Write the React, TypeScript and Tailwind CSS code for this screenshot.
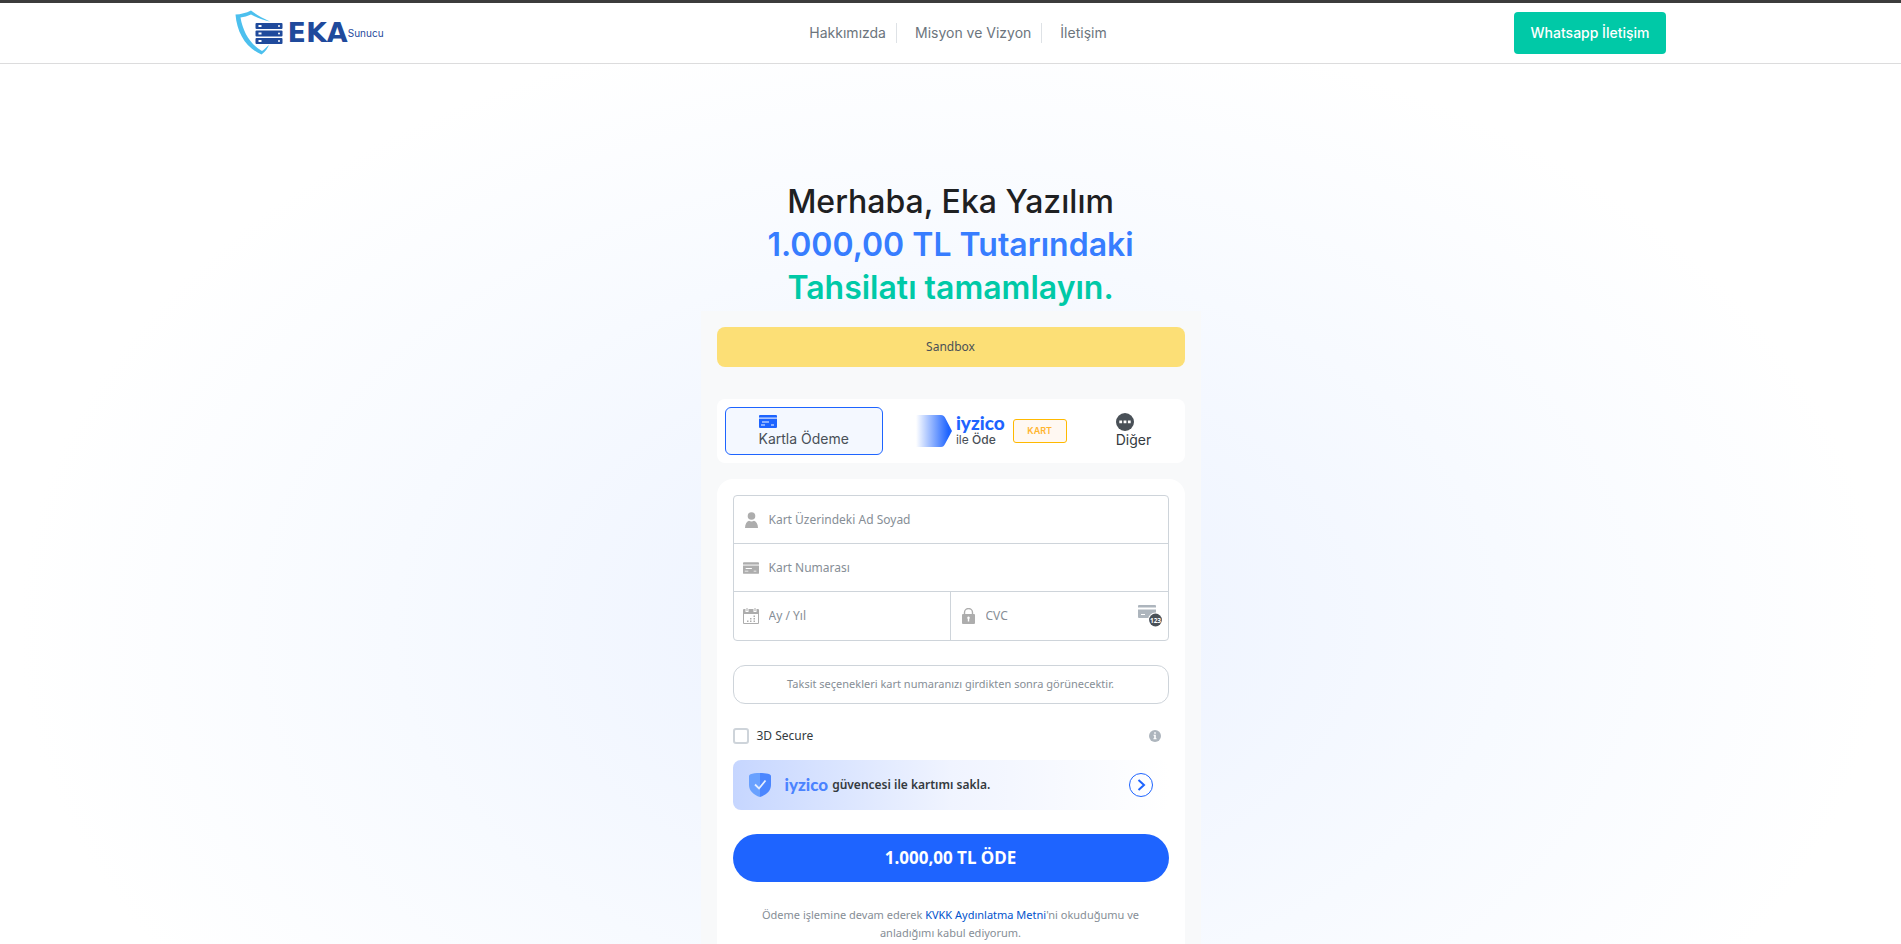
import type { ReactNode } from 'react';

const navLinks = ['Hakkımızda', 'Misyon ve Vizyon', 'İletişim'];

function Logo() {
  return (
    <a href="#" aria-label="EKA Sunucu" className="flex items-center w-40 shrink-0 text-[#1f4a9c]">
      <svg className="shrink-0" width="49" height="46" viewBox="0 0 49 46" fill="none">
        <path d="M0.500 4.500C6 4.300 11 3 16 0.500C21 4.500 27 8 35 11.500C28 10 22 7.800 16 4.500C12.500 6 9 7 5.500 7.500C8 22 15 34 27 41C30 39 32 36.500 34 35C32.500 38.500 30.500 41.500 26.500 44.500C11 38 2 23 0.500 4.500Z" fill="#4cc0ee" />
        {[13, 20.5, 28].map(y => (
          <g key={y}>
            <rect x="20.500" y={y} width="27" height="6" rx="1" fill="#1f4a9c" />
            <rect x="23.500" y={y + 2} width="3" height="2" fill="#fff" />
            <circle cx="44" cy={y + 3} r="1" fill="#fff" />
          </g>
        ))}
      </svg>
      <span className="ml-1 font-['DejaVu_Sans',sans-serif] text-[27px] leading-8 font-bold">EKA</span>
      <span className="text-[10px]">Sunucu</span>
    </a>
  );
}

function CardIcon({ className }: { className: string }) {
  return (
    <svg className={className} viewBox="0 0 18 13" fill="currentColor">
      <path d="M1 0h16a1 1 0 0 1 1 1v1.500H0V1a1 1 0 0 1 1-1Z" />
      <path d="M0 2.500h18V4H0z" opacity=".35" />
      <path fillRule="evenodd" d="M0 4h18v8a1 1 0 0 1-1 1H1a1 1 0 0 1-1-1V4Zm3 2.500v1h7v-1H3Zm-1 3v1h4v-1H2Zm10 0v1h3v-1h-3Z" />
    </svg>
  );
}

function UserIcon() {
  return (
    <svg className="size-4" viewBox="0 0 16 16" fill="currentColor">
      <circle cx="8.500" cy="4" r="3.800" />
      <path d="M2 16c0-4 2-6.500 4-7.200 1.500.9 3.500.9 5 0 2 .7 4 3.200 4 7.200H2Z" />
    </svg>
  );
}

function CalendarIcon() {
  return (
    <svg className="size-4" viewBox="0 0 16 16" fill="currentColor">
      <path fillRule="evenodd" d="M1 1h1.500v3h3V1h5v3h3V1H15a1 1 0 0 1 1 1v13a1 1 0 0 1-1 1H1a1 1 0 0 1-1-1V2a1 1 0 0 1 1-1Zm0 5v9h14V6H1Z" />
      <path d="M3.500 0h1v3h-1zM11.500 0h1v3h-1zM10.500 7.500H12V9h-1.500zM7 10h1.500v1.500H7zM10.500 10H12v1.500h-1.500zM4 12.500h1.500V14H4zM7 12.500h1.500V14H7zM10.500 12.500H12V14h-1.500z" />
    </svg>
  );
}

function LockIcon() {
  return (
    <svg className="size-4" viewBox="0 0 16 16" fill="currentColor">
      <path d="M4.500 6.500V4.500a4 4 0 0 1 8 0v2" fill="none" stroke="currentColor" strokeWidth="1.400" />
      <path fillRule="evenodd" d="M3 6h11a1 1 0 0 1 1 1v8a1 1 0 0 1-1 1H3a1 1 0 0 1-1-1V7a1 1 0 0 1 1-1Zm5.500 2.500a1.300 1.300 0 0 0-.7 2.400V13.500h1.400v-2.600a1.300 1.300 0 0 0-.7-2.400Z" />
    </svg>
  );
}

function CvcIcon() {
  return (
    <svg className="w-6 h-[22px] shrink-0" viewBox="0 0 24 22">
      <path d="M1 0h16a1 1 0 0 1 1 1v1.500H0V1a1 1 0 0 1 1-1ZM0 4.500h18V8l-6 5H1a1 1 0 0 1-1-1Z" fill="#adb5bd" />
      <path d="M3 9h4v1H3z" fill="#fff" />
      <circle cx="17.500" cy="15" r="7.600" fill="#fff" />
      <circle cx="17.500" cy="15" r="6.400" fill="#495057" />
      <text x="17.500" y="17.500" textAnchor="middle" fill="#fff" fontSize="6.500" fontWeight="700">123</text>
    </svg>
  );
}

function ShieldIcon() {
  return (
    <svg className="w-[22px] h-6 shrink-0" viewBox="0 0 22 24">
      <path d="M11 0C7 0 3.500.5 1.500 1.200A2 2 0 0 0 0 3v9c0 5.500 4.500 10 11 12Z" fill="#69a1ff" />
      <path d="M11 0c4 0 7.500.5 9.500 1.200A2 2 0 0 1 22 3v9c0 5.500-4.500 10-11 12Z" fill="#4b86ff" />
      <path d="m6 11.500 4 4 6.500-8" fill="none" stroke="#e4edff" strokeWidth="1.800" />
    </svg>
  );
}

function Field({ icon, label, className = '', children }: { icon: ReactNode; label: string; className?: string; children?: ReactNode }) {
  return (
    <label className={`flex h-12 min-w-0 items-center pl-[9px] pr-1.5 ${className}`}>
      <span className="mr-2.5 text-[#adadad]">{icon}</span>
      <input
        type="text"
        aria-label={label}
        placeholder={label}
        className="min-w-0 flex-1 bg-transparent text-xs text-[#495057] outline-none placeholder:text-[#868e96]"
      />
      {children}
    </label>
  );
}

export default function App() {
  return (
    <div className="min-h-screen flex flex-col bg-white border-t-3 border-[#3c3c3c] font-[Inter,sans-serif]">
      {/* Header */}
      <header className="border-b border-[#dcdcdd]">
        <div className="mx-auto flex h-[60px] max-w-[1432px] items-center justify-between">
          <Logo />
          <nav className="flex text-sm text-[#6c757d]">
            {navLinks.map(link => (
              <a key={link} href="#" className="border-r border-[#dee2e6] pl-[18px] pr-2.5 last:border-r-0">
                {link}
              </a>
            ))}
          </nav>
          <a href="#" className="flex h-[42px] items-center rounded bg-[#00c9a7] px-[17px] text-sm font-medium text-white">
            Whatsapp İletişim
          </a>
        </div>
      </header>

      <main className="flex flex-1 flex-col items-center bg-[radial-gradient(ellipse_49%_70%_at_50%_64%,#edf3ff_0%,#f0f5ff_25%,#f7faff_60%,#ffffff_100%)] pt-[116px]">
        <h1 className="text-center text-[32px] leading-[43px] font-medium text-[#1e2022]">
          Merhaba, Eka Yazılım
          <span className="block font-semibold text-[#377dff]">1.000,00 TL Tutarındaki</span>
          <span className="block font-semibold text-[#00c9a7]">Tahsilatı tamamlayın.</span>
        </h1>

        {/* Checkout form */}
        <div className="mt-0.5 flex w-full max-w-[500px] flex-1 flex-col bg-[#f8f9fa] px-4 pt-4 font-['Noto_Sans',sans-serif] text-[#495057]">
          <div className="flex h-10 items-center justify-center rounded-lg bg-[#fcdf76] text-xs">Sandbox</div>

          <div className="mt-8 flex h-16 rounded-lg bg-white p-2 font-[Inter,sans-serif]">
            <button className="flex flex-col items-start justify-center rounded-md border border-[#1e64ff] bg-[#f4f8ff] px-[33px] text-sm leading-[18px]">
              <CardIcon className="mb-0.5 h-[13px] w-[18px] text-[#1e64ff]" />
              Kartla Ödeme
            </button>
            <button className="flex items-center px-[33px]">
              <svg width="36" height="32" viewBox="0 0 36 32">
                <defs>
                  <linearGradient id="arrow">
                    <stop offset="0" stopColor="#fff" />
                    <stop offset=".9" stopColor="#1e64ff" />
                  </linearGradient>
                </defs>
                <path d="M0 0h25c2 0 3 1 4 2.500l7 13.500-7 13C28 31 27 32 25 32H0Z" fill="url(#arrow)" />
              </svg>
              <span className="ml-1 text-left">
                <span className="block font-[Lato,sans-serif] text-[19px] leading-[18px] font-black text-[#1e64ff]">iyzico</span>
                <span className="block text-xs leading-4">
                  ile <span className="font-medium">Öde</span>
                </span>
              </span>
              <span className="ml-2 flex h-6 w-[54px] items-center justify-center rounded-[3px] border border-[#ffb900] bg-[#fff8f2] text-[9px] font-semibold text-[#ffb52e]">
                KART
              </span>
            </button>
            <button className="flex flex-col items-start justify-center px-4 text-sm leading-[18px] text-[#343a40]">
              <svg width="18" height="18" viewBox="0 0 18 18">
                <circle cx="9" cy="9" r="9" fill="#495057" />
                <path d="M3.300 7.500h2.800v2.800H3.300zM7.600 7.500h2.800v2.800H7.600zM11.900 7.500h2.800v2.800h-2.800z" fill="#fff" />
              </svg>
              Diğer
            </button>
          </div>

          <form className="mt-4 flex-1 rounded-t-2xl bg-white px-4 pt-4">
            <div className="rounded border border-[#ced4da]">
              <Field icon={<UserIcon />} label="Kart Üzerindeki Ad Soyad" className="border-b border-[#ced4da]" />
              <Field icon={<CardIcon className="h-3 w-4" />} label="Kart Numarası" className="border-b border-[#ced4da]" />
              <div className="grid grid-cols-2">
                <Field icon={<CalendarIcon />} label="Ay / Yıl" className="border-r border-[#ced4da]" />
                <Field icon={<LockIcon />} label="CVC">
                  <CvcIcon />
                </Field>
              </div>
            </div>

            <p className="mt-6 flex h-[39px] items-center justify-center rounded-xl border border-[#ced4da] text-[11px] text-[#868e96]">
              Taksit seçenekleri kart numaranızı girdikten sonra görünecektir.
            </p>

            <div className="mt-[22px] flex h-5 items-center justify-between pr-2">
              <label className="flex items-center gap-2 text-xs text-[#343a40]">
                <input type="checkbox" className="size-4 appearance-none rounded-[3px] border-2 border-[#ced4da] bg-white" />
                3D Secure
              </label>
              <svg width="12" height="12" viewBox="0 0 12 12">
                <circle cx="6" cy="6" r="6" fill="#adb5bd" />
                <path d="M5.200 2.200h1.600v1.500H5.200zM4.500 4.800h2.300v3.500h.8v1H4.400v-1h.8V5.800h-.7z" fill="#fff" />
              </svg>
            </div>

            <button type="button" className="mt-3.5 flex h-[50px] w-full items-center rounded-lg bg-linear-to-r from-[#c6d6ff] via-[#f0f4ff] to-white px-4 text-[#343a40]">
              <ShieldIcon />
              <span className="ml-3.5 font-[Lato,sans-serif] text-[17px] font-black text-[#4b83ff]">iyzico</span>
              <span className="ml-1 text-xs font-semibold">güvencesi ile kartımı sakla.</span>
              <svg className="ml-auto" width="24" height="24" viewBox="0 0 24 24" fill="none" stroke="#1e64ff">
                <circle cx="12" cy="12" r="11.500" />
                <path d="m9.500 7 5.500 5-5.500 5" strokeWidth="2" />
              </svg>
            </button>

            <button type="button" className="mt-6 h-12 w-full rounded-full bg-[#1e64ff] text-[17px] font-bold text-white">
              1.000,00 TL ÖDE
            </button>

            <p className="mt-6 px-4 text-center text-[11px] leading-[18px] text-[#868e96]">
              Ödeme işlemine devam ederek <a href="#" className="text-[#0052cc]">KVKK Aydınlatma Metni</a>'ni okuduğumu ve anladığımı kabul ediyorum.
            </p>
          </form>
        </div>
      </main>
    </div>
  );
}
